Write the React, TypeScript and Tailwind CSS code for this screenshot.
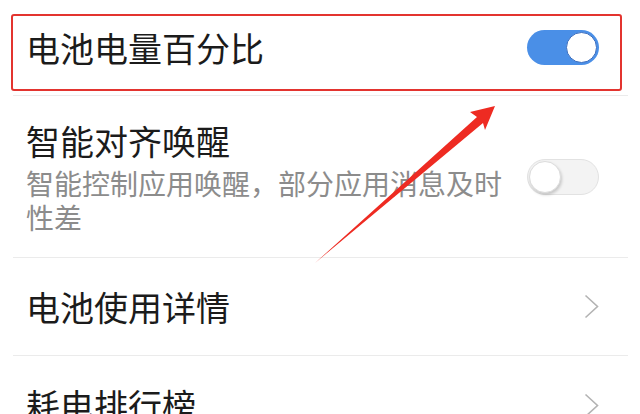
const font = { fontFamily: '"Noto Sans CJK SC", "Noto Sans", sans-serif' };

function Toggle({ on }: { on: boolean }) {
    if (on) {
        return (
            <div className="flex h-[35px] w-[72px] shrink-0 items-center justify-end rounded-full bg-[#4a8fe7] pr-[2px]">
                <div className="h-[31px] w-[31px] rounded-full border border-[#3d6fbf] bg-white" />
            </div>
        );
    }
    return (
        <div className="flex h-[36px] w-[72px] shrink-0 items-center rounded-full border border-[#e2e2e2] bg-[#f3f3f3] pl-[1px]">
            <div className="h-[32px] w-[32px] rounded-full border border-[#dcdcdc] bg-white shadow-[1px_2px_3px_rgba(0,0,0,0.18)]" />
        </div>
    );
}

function Chevron() {
    return (
        <svg width="15" height="25" viewBox="0 0 15 25" className="shrink-0">
            <polyline points="1.5,1.5 13.5,12.5 1.5,23.5" fill="none" stroke="#b3b3b3" strokeWidth="1.6" />
        </svg>
    );
}

function Divider() {
    return <div className="ml-[13px] mr-[12px] h-px bg-[#ebebeb]" />;
}

export default function App() {
    return (
        <div className="relative h-[414px] w-[640px] overflow-hidden bg-white" style={font}>
            <div className="flex h-[95px] items-center pl-[26px] pr-[41px]">
                <span className="text-[34px] leading-none text-[#1b1b1b]">电池电量百分比</span>
                <div className="ml-auto">
                    <Toggle on />
                </div>
            </div>
            <Divider />
            <div className="flex h-[161px] items-center pl-[26px] pr-[41px]">
                <div className="w-[480px]">
                    <div className="text-[34px] leading-[44px] text-[#1b1b1b]">智能对齐唤醒</div>
                    <div className="mt-[3px] text-[28px] leading-[34px] text-[#8c8c8c]">
                        智能控制应用唤醒，部分应用消息及时性差
                    </div>
                </div>
                <div className="ml-auto">
                    <Toggle on={false} />
                </div>
            </div>
            <Divider />
            <div className="flex h-[97px] items-center pl-[26px] pr-[41px]">
                <span className="text-[34px] leading-none text-[#1b1b1b]">电池使用详情</span>
                <div className="ml-auto">
                    <Chevron />
                </div>
            </div>
            <Divider />
            <div className="flex h-[98px] items-center pl-[26px] pr-[41px]">
                <span className="text-[34px] leading-none text-[#1b1b1b]">耗电排行榜</span>
                <div className="ml-auto">
                    <Chevron />
                </div>
            </div>

            {/* annotation overlay */}
            <div className="pointer-events-none absolute left-[11px] top-[14px] h-[77px] w-[611px] rounded-[3px] border-2 border-[#e3342f]" />
            <svg className="pointer-events-none absolute left-0 top-0" width="640" height="414">
                <polygon points="495,106 470,112 477,117 315,263 483,123 485,130" fill="#ee2b22" />
            </svg>
        </div>
    );
}
